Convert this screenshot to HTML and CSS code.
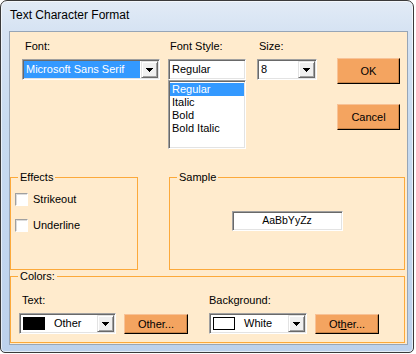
FILE: index.html
```html
<!DOCTYPE html>
<html lang="en">

<head>
    <meta charset="UTF-8">
    <title>Text Character Format</title>
    <link rel="stylesheet" href="styles.css">
</head>

<body>
<div class="window">
    <div class="titlebar">Text Character Format</div>

    <div class="client">
        <!-- font / style / size -->
        <div class="toprow">
            <div class="field font">
                <label>Font:</label>
                <div class="combo">
                    <span class="value picked">Microsoft Sans Serif</span>
                    <span class="drop"><svg width="7" height="4" viewBox="0 0 7 4"><polygon points="0,0 7,0 3.5,4"/></svg></span>
                </div>
            </div>
            <div class="field style">
                <label>Font Style:</label>
                <div class="textbox">Regular</div>
                <ul class="listbox">
                    <li class="active">Regular</li>
                    <li>Italic</li>
                    <li>Bold</li>
                    <li>Bold Italic</li>
                </ul>
            </div>
            <div class="field size">
                <label>Size:</label>
                <div class="combo">
                    <span class="value">8</span>
                    <span class="drop"><svg width="7" height="4" viewBox="0 0 7 4"><polygon points="0,0 7,0 3.5,4"/></svg></span>
                </div>
            </div>
            <div class="actions">
                <button class="btn">OK</button>
                <button class="btn">Cancel</button>
            </div>
        </div>

        <!-- effects / sample -->
        <div class="midrow">
            <fieldset class="group effects">
                <legend>Effects</legend>
                <div class="checks">
                    <label class="check"><span class="box"></span>Strikeout</label>
                    <label class="check"><span class="box"></span>Underline</label>
                </div>
            </fieldset>
            <fieldset class="group sample">
                <legend>Sample</legend>
                <div class="preview">AaBbYyZz</div>
            </fieldset>
        </div>

        <!-- colors -->
        <fieldset class="group colors">
            <legend>Colors:</legend>
            <div class="pickers">
                <div class="picker textcolor">
                    <label>Text:</label>
                    <div class="pickrow">
                        <div class="combo color">
                            <span class="swatch black"></span>
                            <span class="value">Other</span>
                            <span class="drop"><svg width="7" height="4" viewBox="0 0 7 4"><polygon points="0,0 7,0 3.5,4"/></svg></span>
                        </div>
                        <button class="btn small">Other...</button>
                    </div>
                </div>
                <div class="picker backcolor">
                    <label>Background:</label>
                    <div class="pickrow">
                        <div class="combo color">
                            <span class="swatch white"></span>
                            <span class="value">White</span>
                            <span class="drop"><svg width="7" height="4" viewBox="0 0 7 4"><polygon points="0,0 7,0 3.5,4"/></svg></span>
                        </div>
                        <button class="btn small">Ot<u>h</u>er...</button>
                    </div>
                </div>
            </div>
        </fieldset>
    </div>
</div>
</body>

</html>
```

FILE: styles.css
```css
* {
    margin: 0;
    padding: 0;
    box-sizing: border-box;
}

li {
    list-style: none;
}

body {
    background: #fff;
    font-family: "Liberation Sans", Arial, sans-serif;
    font-size: 11px;
    line-height: 13px;
    color: #000;
}

/* window frame */
.window {
    width: 414px;
    height: 353px;
    border: 1px solid #3a3a3a;
    border-radius: 7px 7px 5px 5px;
    background: linear-gradient(180deg, #e2ebf6 0, #d6e3f3 30px, #c8dbf0 120px, #bcd1ec 100%);
    box-shadow: inset 0 0 0 1px rgba(255, 255, 255, 0.6);
    display: flex;
    flex-direction: column;
}

.titlebar {
    height: 30px;
    padding: 7px 0 0 9px;
    font-size: 12px;
    line-height: 15px;
}

.client {
    height: 314px;
    margin: 0 5px 0 8px;
    border: 1px solid #97a5b6;
    background: #ffebcd;
    display: flex;
    flex-direction: column;
}

/* sunken 3d edge used by combos, text boxes, list */
.combo,
.textbox,
.listbox,
.preview,
.box {
    background: #fff;
    border: 1px solid;
    border-color: #a0a0a0 #fff #fff #a0a0a0;
    box-shadow: inset 1px 1px 0 #696969, inset -1px -1px 0 #e3e3e3;
}

/* top row */
.toprow {
    height: 139px;
    display: flex;
    padding: 8px 0 0 12px;
}

.field label {
    display: block;
    padding-left: 2px;
    margin-bottom: 6px;
}

.field.font {
    width: 138px;
}

.field.font label {
    padding-left: 3px;
}

.field.style {
    width: 78px;
    margin-left: 8px;
}

.field.size {
    width: 60px;
    margin-left: 11px;
}

.combo {
    height: 21px;
    padding: 1px;
    display: flex;
    line-height: 17px;
}

.combo .value {
    flex: 1;
    padding-left: 2px;
    white-space: nowrap;
    overflow: hidden;
}

.combo .value.picked {
    background: #3399ff;
    color: #fff;
    margin-right: 1px;
}

.combo .drop {
    width: 17px;
    height: 17px;
    margin-left: auto;
    background: #f0f0f0;
    border: 1px solid;
    border-color: #e3e3e3 #696969 #696969 #e3e3e3;
    box-shadow: inset 1px 1px 0 #fff, inset -1px -1px 0 #a0a0a0;
    display: flex;
    align-items: center;
    justify-content: center;
}

.combo .drop svg {
    display: block;
    shape-rendering: crispEdges;
}

.textbox {
    height: 21px;
    padding: 1px 0 0 3px;
    line-height: 17px;
}

.listbox {
    height: 69px;
    padding: 2px 1px 1px;
}

.listbox li {
    padding-left: 2px;
    line-height: 13px;
}

.listbox li.active {
    background: #3399ff;
    color: #fff;
}

.actions {
    width: 63px;
    margin-left: 20px;
    margin-top: 18px;
    display: flex;
    flex-direction: column;
    gap: 20px;
}

.btn {
    height: 26px;
    font-family: inherit;
    font-size: 11px;
    color: #000;
    background: #f4a460;
    border: 1px solid;
    border-color: #f8c296 #000 #000 #f8c296;
    box-shadow: inset -1px -1px 0 #c98549;
}

.btn u {
    text-decoration: underline;
}

/* group boxes */
.group {
    border: 1px solid #fca93a;
    min-width: 0;
}

.group legend {
    margin-left: 7px;
    padding: 0 2px;
    line-height: 13px;
}

.midrow {
    height: 99px;
    display: flex;
}

.effects {
    width: 128px;
}

.checks {
    display: flex;
    flex-direction: column;
    gap: 13px;
    padding: 9px 0 0 4px;
}

.check {
    display: flex;
    align-items: center;
    gap: 5px;
    height: 13px;
}

.box {
    width: 13px;
    height: 13px;
    box-shadow: inset 1px 1px 0 #dcdcdc;
}

.sample {
    width: 236px;
    margin-left: 31px;
    display: flex;
    flex-direction: column;
    align-items: center;
}

.preview {
    width: 111px;
    height: 20px;
    margin-top: 27px;
    text-align: center;
    font-size: 10.5px;
    line-height: 16px;
}

.colors {
    width: 395px;
    height: 73px;
}

.pickers {
    display: flex;
    padding: 11px 0 0 8px;
    gap: 21px;
}

.picker label {
    display: block;
    margin-bottom: 6px;
}

.textcolor label {
    padding-left: 3px;
}

.pickrow {
    display: flex;
    align-items: center;
    gap: 8px;
}

.combo.color {
    width: 97px;
    align-items: center;
}

.backcolor .combo.color {
    width: 98px;
}

.swatch {
    width: 22px;
    height: 13px;
    margin-left: 2px;
}

.swatch.black {
    background: #000;
}

.swatch.white {
    background: #fff;
    border: 1px solid #000;
}

.combo.color .value {
    padding-left: 9px;
}

.btn.small {
    width: 64px;
    height: 20px;
}
```
